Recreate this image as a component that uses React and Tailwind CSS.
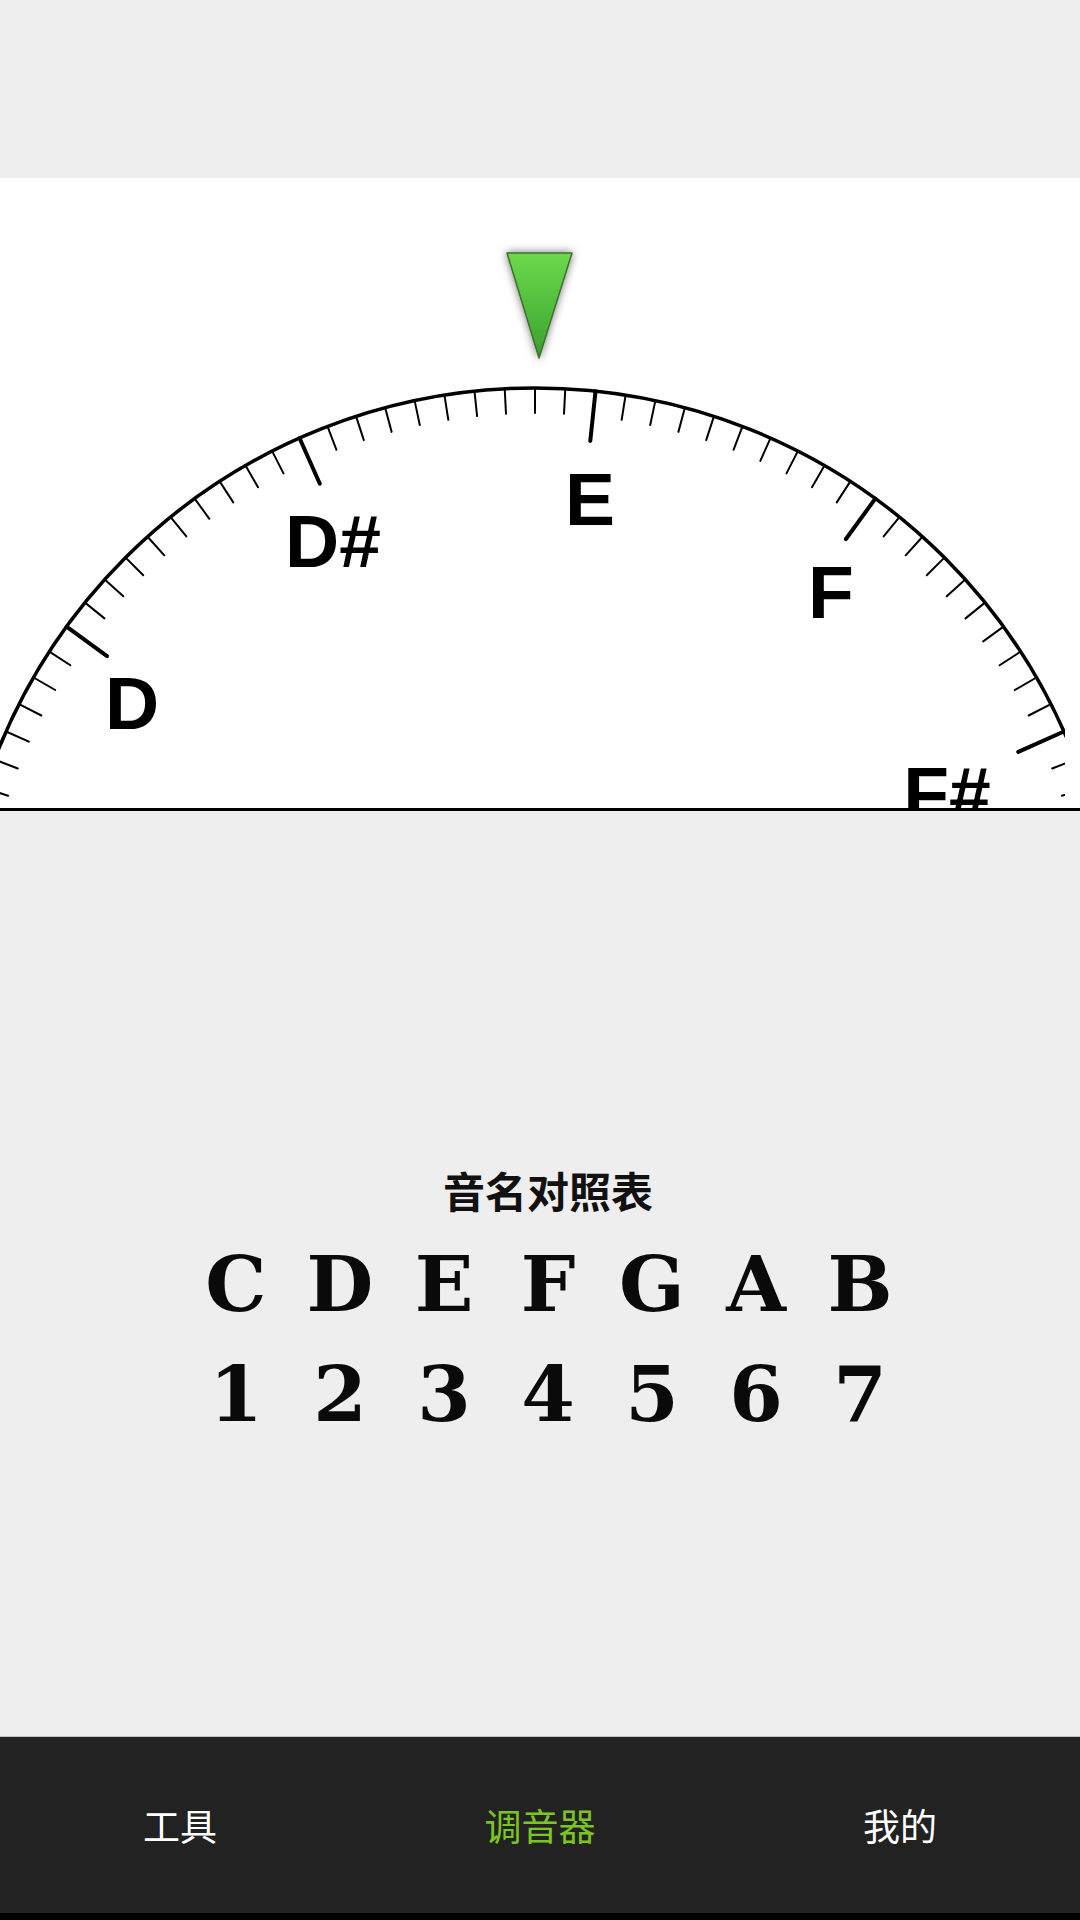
import React from 'react';

const CX = 535;
const CY = 789;
const R = 579;

function Dial(){
  const ticks = [];
  for(let k = -32; k <= 28; k++){
    const a = (6 + 3 * k) * Math.PI / 180;
    const major = k % 10 === 0;
    const len = major ? 50 : 25;
    const s = Math.sin(a), c = Math.cos(a);
    ticks.push(
      <line key={k}
        x1={CX + R * s} y1={CY - R * c}
        x2={CX + (R - len) * s} y2={CY - (R - len) * c}
        stroke="#000" strokeWidth={major ? 4 : 2} strokeLinecap="round" />
    );
  }
  const labels = [
    { t: 'D', x: 132, y: 551 },
    { t: 'D#', x: 333, y: 389 },
    { t: 'E', x: 590, y: 347 },
    { t: 'F', x: 831, y: 440 },
    { t: 'F#', x: 947, y: 641 },
  ];
  return (
    <svg width="1080" height="630" viewBox="0 0 1080 630" className="block">
      <defs>
        <clipPath id="dialClip"><rect x="0" y="0" width="1065" height="630" /></clipPath>
        <linearGradient id="ptr" x1="0" y1="0" x2="0" y2="1">
          <stop offset="0" stopColor="#6cdb4b" />
          <stop offset="1" stopColor="#3a9f2f" />
        </linearGradient>
        <filter id="glow" x="-50%" y="-50%" width="200%" height="200%">
          <feDropShadow dx="0" dy="0" stdDeviation="4" floodColor="#000" floodOpacity="0.55" />
        </filter>
      </defs>
      <g clipPath="url(#dialClip)">
        <circle cx={CX} cy={CY} r={R} fill="none" stroke="#000" strokeWidth="3.5" />
        {ticks}
        {labels.map(l => (
          <text key={l.t} x={l.x} y={l.y} textAnchor="middle" fontSize="75" fontWeight="700"
            fontFamily="'Liberation Sans', Arial, sans-serif" fill="#000">{l.t}</text>
        ))}
      </g>
      <polygon points="507,75 572,75 539,180" fill="url(#ptr)" stroke="#3d6f2e" strokeWidth="1.5"
        strokeLinejoin="round" filter="url(#glow)" />
    </svg>
  );
}

const letters = ['C', 'D', 'E', 'F', 'G', 'A', 'B'];
const numbers = ['1', '2', '3', '4', '5', '6', '7'];

export default function App(){
  return (
    <div className="w-[1080px] h-[1920px] flex flex-col bg-[#eeeeee] overflow-hidden">
      <div className="h-[178px] bg-[#eeeeee]" />
      <div className="bg-white border-b-[3px] border-black">
        <Dial />
      </div>
      <div className="h-[925px] flex flex-col items-center pt-[358px] pl-[16px]">
        <div className="text-[42px] leading-[42px] font-bold text-[#111]"
          style={{ fontFamily: "'Noto Sans CJK SC', sans-serif" }}>音名对照表</div>
        <div className="grid grid-cols-7 w-[728px] mt-[35px] text-[77px] leading-[77px] font-bold text-[#0a0a0a]"
          style={{ fontFamily: "'DejaVu Serif', serif" }}>
          {letters.map(l => <div key={l} className="text-center">{l}</div>)}
        </div>
        <div className="grid grid-cols-7 w-[728px] mt-[33px] text-[77px] leading-[77px] font-bold text-[#0a0a0a]"
          style={{ fontFamily: "'DejaVu Serif', serif" }}>
          {numbers.map(n => <div key={n} className="text-center">{n}</div>)}
        </div>
      </div>
      <div className="h-[177px] bg-[#222222] border-t border-[#c4c4c4] grid grid-cols-3 items-center text-[37px] leading-none"
        style={{ fontFamily: "'Noto Sans CJK SC', sans-serif" }}>
        <div className="text-center text-white">工具</div>
        <div className="text-center text-[#7cc521]">调音器</div>
        <div className="text-center text-white">我的</div>
      </div>
      <div className="h-[7px] bg-black" />
    </div>
  );
}
